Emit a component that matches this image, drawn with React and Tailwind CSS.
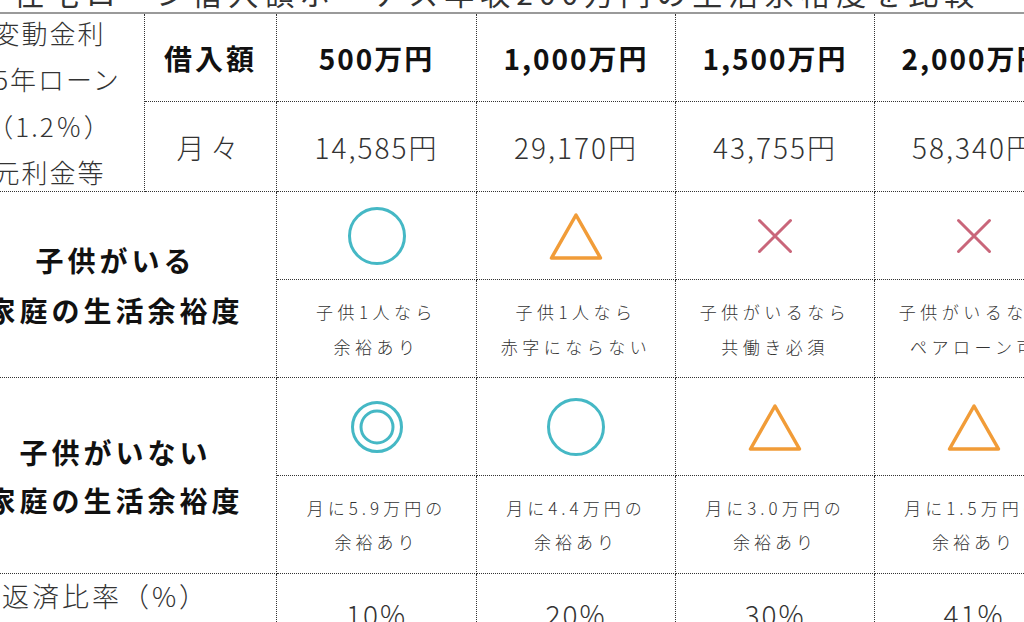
import React from "react";

const TEAL = "#45b8c5";
const ORANGE = "#f19c38";
const ROSE = "#c9667a";

function Icon({ type }) {
  if (type === "circle")
    return (
      <svg width="60" height="60" viewBox="0 0 60 60">
        <circle cx="30" cy="30" r="27.5" fill="none" stroke={TEAL} strokeWidth="3" />
      </svg>
    );
  if (type === "double")
    return (
      <svg width="56" height="56" viewBox="0 0 56 56">
        <circle cx="28" cy="28" r="24.5" fill="none" stroke={TEAL} strokeWidth="3" />
        <circle cx="28" cy="28" r="16" fill="none" stroke={TEAL} strokeWidth="3" />
      </svg>
    );
  if (type === "triangle")
    return (
      <svg width="56" height="50" viewBox="0 0 56 50">
        <polygon
          points="28,4 3.5,47 52.5,47"
          fill="none"
          stroke={ORANGE}
          strokeWidth="3.5"
          strokeLinejoin="round"
        />
      </svg>
    );
  return (
    <svg width="36" height="36" viewBox="0 0 36 36">
      <path d="M2.5 2.5 L33.5 33.5 M33.5 2.5 L2.5 33.5" stroke={ROSE} strokeWidth="3" strokeLinecap="round" fill="none" />
    </svg>
  );
}

const cols = [
  {
    amt: "500万円",
    pay: "14,585円",
    kidIcon: "circle",
    kidText: ["子供1人なら", "余裕あり"],
    noKidIcon: "double",
    noKidText: ["月に5.9万円の", "余裕あり"],
    ratio: "10%",
  },
  {
    amt: "1,000万円",
    pay: "29,170円",
    kidIcon: "triangle",
    kidText: ["子供1人なら", "赤字にならない"],
    noKidIcon: "circle",
    noKidText: ["月に4.4万円の", "余裕あり"],
    ratio: "20%",
  },
  {
    amt: "1,500万円",
    pay: "43,755円",
    kidIcon: "cross",
    kidText: ["子供がいるなら", "共働き必須"],
    noKidIcon: "triangle",
    noKidText: ["月に3.0万円の", "余裕あり"],
    ratio: "30%",
  },
  {
    amt: "2,000万円",
    pay: "58,340円",
    kidIcon: "cross",
    kidText: ["子供がいるなら", "ペアローン可"],
    noKidIcon: "triangle",
    noKidText: ["月に1.5万円の", "余裕あり"],
    ratio: "41%",
  },
];

const cell = "border-r border-b border-dotted border-[#333] flex items-center justify-center text-center";

export default function App() {
  return (
    <div className="w-[1024px] h-[622px] overflow-hidden bg-white font-['Noto_Sans_CJK_JP','Noto_Sans',sans-serif] text-[#333]">
      <div className="mt-[-28px] h-[42px] border-b-2 border-[#9a9a9a] flex justify-center pr-[30px]">
        <div className="text-[30px] leading-[40px] tracking-[6px] font-normal text-[#333] whitespace-nowrap">
          住宅ローン借入額ボーナス年収200万円の生活余裕度を比較
        </div>
      </div>
      <div className="ml-[-45px] w-[1119px] grid grid-cols-[190px_132px_200px_199px_199px_199px] grid-rows-[88px_90px_88px_98px_98px_98px_80px]">
        <div className={`${cell} row-span-2 overflow-visible`}>
          <div className="text-[26px] leading-[46.5px] tracking-[2px] font-light whitespace-nowrap">
            <div>変動金利</div>
            <div>35年ローン</div>
            <div>（1.2％）</div>
            <div>元利金等</div>
          </div>
        </div>
        <div className={`${cell} text-[28px] font-bold tracking-[3px] text-[#111]`}>借入額</div>
        {cols.map((c) => (
          <div key={c.amt} className={`${cell} text-[28px] font-bold tracking-[2px] text-[#111] whitespace-nowrap`}>
            {c.amt}
          </div>
        ))}
        <div className={`${cell} text-[28px] font-light tracking-[6px]`}>月々</div>
        {cols.map((c) => (
          <div key={c.pay} className={`${cell} text-[28px] font-light tracking-[2px] whitespace-nowrap`}>
            {c.pay}
          </div>
        ))}

        <div className={`${cell} col-span-2 row-span-2`}>
          <div className="text-[28px] leading-[50px] font-bold tracking-[4px] text-[#111] whitespace-nowrap">
            <div>子供がいる</div>
            <div>家庭の生活余裕度</div>
          </div>
        </div>
        {cols.map((c, i) => (
          <div key={"ki" + i} className={cell}>
            <Icon type={c.kidIcon} />
          </div>
        ))}
        {cols.map((c, i) => (
          <div key={"kt" + i} className={`${cell} text-[17px] leading-[35px] font-light tracking-[4.5px] text-[#333] whitespace-nowrap`}>
            <div>
              <div>{c.kidText[0]}</div>
              <div>{c.kidText[1]}</div>
            </div>
          </div>
        ))}

        <div className={`${cell} col-span-2 row-span-2`}>
          <div className="text-[28px] leading-[48px] font-bold tracking-[4px] text-[#111] whitespace-nowrap">
            <div>子供がいない</div>
            <div>家庭の生活余裕度</div>
          </div>
        </div>
        {cols.map((c, i) => (
          <div key={"ni" + i} className={cell}>
            <Icon type={c.noKidIcon} />
          </div>
        ))}
        {cols.map((c, i) => (
          <div key={"nt" + i} className={`${cell} text-[17px] leading-[34px] font-light tracking-[4px] text-[#333] whitespace-nowrap`}>
            <div>
              <div>{c.noKidText[0]}</div>
              <div>{c.noKidText[1]}</div>
            </div>
          </div>
        ))}

        <div className="border-r border-b border-dotted border-[#333] col-span-2 flex justify-center text-center">
          <div className="text-[27px] leading-[44px] font-light tracking-[3px] whitespace-nowrap pr-[20px]">返済比率（%）</div>
        </div>
        {cols.map((c, i) => (
          <div key={"r" + i} className={`${cell} text-[28px] font-light tracking-[2px]`}>
            {c.ratio}
          </div>
        ))}
      </div>
    </div>
  );
}
